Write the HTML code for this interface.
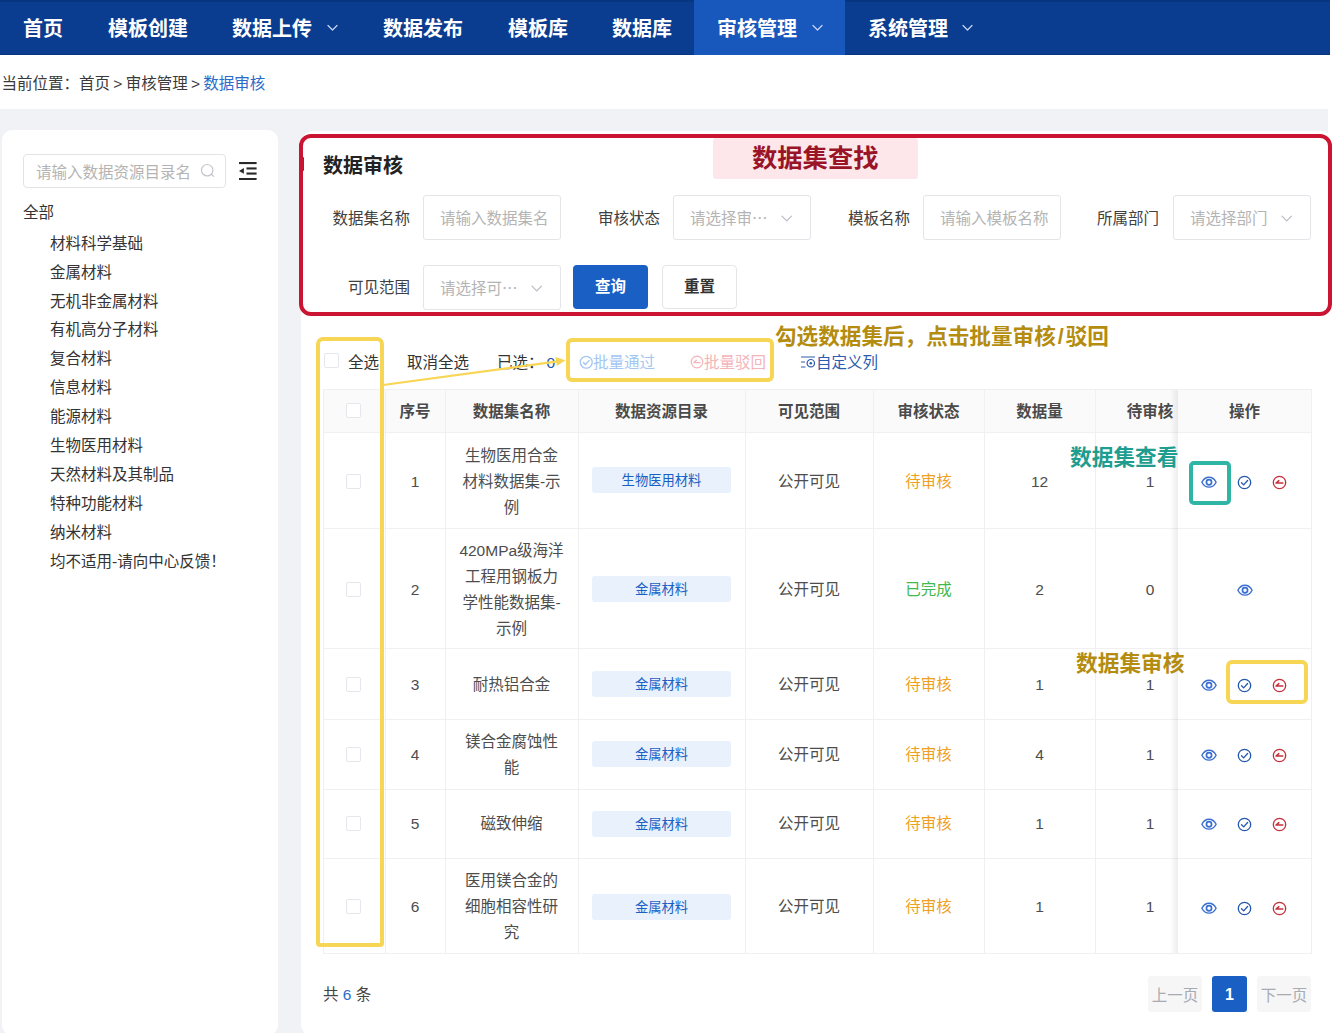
<!DOCTYPE html>
<html lang="zh-CN">
<head>
<meta charset="utf-8">
<title>数据审核</title>
<style>
*{box-sizing:border-box;margin:0;padding:0}
html,body{width:1333px;height:1033px;overflow:hidden;background:#fff}
body{font-family:"Liberation Sans","Noto Sans CJK SC",sans-serif;color:#333;position:relative;font-size:15.5px}
.abs{position:absolute}
.t{position:absolute;white-space:nowrap;line-height:1}
/* nav */
#nav{position:absolute;left:0;top:0;width:1330px;height:55px;background:#0a3d90;box-shadow:inset 0 2px 0 rgba(0,0,40,.13),inset 0 -1px 0 rgba(0,0,40,.13)}
#nav .act{position:absolute;left:694px;top:0;width:151px;height:55px;background:#1858bd}
#nav .ni{position:absolute;top:17px;font-size:20px;font-weight:700;color:#fff;line-height:24px;white-space:nowrap}
#nav svg{position:absolute;top:23px}
#crumb{left:1.5px;top:75px;word-spacing:-1px;font-size:15.5px;color:#3a3a3a;line-height:18px}
#crumb span{color:#2a6bc9}
#gray{position:absolute;left:0;top:109px;width:1328px;height:924px;background:#f0f2f5}
/* sidebar */
#side{position:absolute;left:2px;top:130px;width:276px;height:905px;background:#fff;border-radius:10px}
#sinput{position:absolute;left:23px;top:154px;width:203px;height:34px;border:1px solid #e2e3e6;border-radius:4px;background:#fff}
#sinput .ph{left:12px;top:8.5px;font-size:15.5px;color:#b4b4b4;line-height:18px}
.tree{margin-top:1px;font-size:15.5px;color:#333;line-height:18px}
/* main */
#card1{position:absolute;left:301px;top:131px;width:1032px;height:300px;background:#fff;border-radius:12px 12px 0 0}
#card2{position:absolute;left:301px;top:320px;width:1032px;height:715px;background:#fff;border-radius:10px}

.lbl{position:absolute;margin-top:1px;font-size:15.5px;color:#404040;line-height:18px;white-space:nowrap;text-align:right}
.inp{position:absolute;margin:-1px 0 0 -1px;height:45px;width:138px;border:1px solid #e3e5e9;border-radius:3px;background:#fff}
.inp .ph{position:absolute;left:16px;top:14px;font-size:15.5px;color:#b4b4b4;line-height:18px;white-space:nowrap;overflow:hidden}
.inp svg{position:absolute;right:18px;top:19px}
.btn{position:absolute;height:44px;width:75px;border-radius:4px;font-size:15.5px;font-weight:700;line-height:44px;text-align:center}

#tbl{position:absolute;left:323px;top:390px;width:988px;height:564px}
#tbl .hbg{top:-1px!important;height:43px!important;width:989px!important}
.hl{position:absolute;left:0;width:989px;height:1px;background:#f0f0f0}
.vl{position:absolute;top:0;width:1px;height:563px;background:#f0f0f0}
.th{position:absolute;top:0;height:42px;line-height:43px;font-size:15.5px;font-weight:700;color:#4a4a4a;text-align:center;white-space:nowrap}
.td{position:absolute;padding-top:1px;font-size:15.5px;color:#4d4d4d;text-align:center;line-height:26px;display:flex;align-items:center;justify-content:center}
.tag{position:absolute;left:269px;width:139px;height:26px;background:#e8f1fc;border-radius:3px;color:#1a5fc4;font-size:13.3px;line-height:28px;text-align:center}
.cb{position:absolute;width:15px;height:15px;border:1px solid #e5e7ec;border-radius:2px;background:#fff}
.wait{color:#f0a020}.done{color:#3fb950}
.tb{position:absolute;margin-top:1px;white-space:nowrap;font-size:15.5px;line-height:18px;color:#333}

.ann{position:absolute;white-space:nowrap;font-weight:700;line-height:1}
.el{font-family:"Noto Sans CJK SC",sans-serif;line-height:0}
</style>
</head>
<body>
<div id="nav">
  <div class="act"></div>
  <div class="ni" style="left:23px">首页</div>
  <div class="ni" style="left:108px">模板创建</div>
  <div class="ni" style="left:232px">数据上传</div>
  <div class="ni" style="left:383px">数据发布</div>
  <div class="ni" style="left:508px">模板库</div>
  <div class="ni" style="left:612px">数据库</div>
  <div class="ni" style="left:717px">审核管理</div>
  <div class="ni" style="left:868px">系统管理</div>
</div>
<div id="crumb" class="t">当前位置：首页 &gt; 审核管理 &gt; <span>数据审核</span></div>
<div id="gray"></div>
<div id="side"></div>
<div id="card1"></div>
<div id="card2"></div>
<div id="sinput"><div class="t ph">请输入数据资源目录名</div>
<svg class="abs" style="left:175px;top:7px" width="18" height="18" viewBox="0 0 18 18" fill="none" stroke="#c3c6cc" stroke-width="1.200"><circle cx="8.200" cy="8.200" r="5.700"/><path d="M12.300 12.300l2.300 2" stroke-linecap="round"/></svg></div>
<svg class="abs" style="left:238.900px;top:161.800px" width="18" height="18.500" viewBox="0 0 18 18.500" fill="#2a2a2a"><rect x="0" y="0" width="17.600" height="2.100"/><rect x="7.500" y="5.400" width="10.100" height="2.100"/><rect x="7.500" y="10.500" width="10.100" height="2.100"/><rect x="0" y="16" width="17.600" height="2.100"/><path d="M0 8.900l4.900-2.900v5.800z"/></svg>
<div class="t tree" style="left:23px;top:203px">全部</div>
<div class="t tree" style="left:50px;top:234px">材料科学基础</div>
<div class="t tree" style="left:50px;top:263px">金属材料</div>
<div class="t tree" style="left:50px;top:292px">无机非金属材料</div>
<div class="t tree" style="left:50px;top:320px">有机高分子材料</div>
<div class="t tree" style="left:50px;top:349px">复合材料</div>
<div class="t tree" style="left:50px;top:378px">信息材料</div>
<div class="t tree" style="left:50px;top:407px">能源材料</div>
<div class="t tree" style="left:50px;top:436px">生物医用材料</div>
<div class="t tree" style="left:50px;top:465px">天然材料及其制品</div>
<div class="t tree" style="left:50px;top:494px">特种功能材料</div>
<div class="t tree" style="left:50px;top:523px">纳米材料</div>
<div class="t tree" style="left:50px;top:552px">均不适用-请向中心反馈！</div>
<div class="abs" style="left:301px;top:157px;width:3px;height:14px;background:#2b4a9b;border-radius:1px"></div>
<div class="t" style="left:323px;top:154px;font-size:20px;font-weight:700;color:#222;line-height:24px">数据审核</div>
<div class="lbl" style="right:923px;top:209px">数据集名称</div>
<div class="inp" style="left:424px;top:196px;width:138px"><div class="ph">请输入数据集名</div></div>
<div class="lbl" style="right:673px;top:209px">审核状态</div>
<div class="inp" style="left:674px;top:196px;width:138px"><div class="ph">请选择审<span class="el">…</span></div><svg width="11.5" height="7.600" viewBox="0 0 12 8" fill="none" stroke="#b9bcc4" stroke-width="1.3" stroke-linecap="round" stroke-linejoin="round"><path d="M1 1.2l5 5 5-5"/></svg></div>
<div class="lbl" style="right:423px;top:209px">模板名称</div>
<div class="inp" style="left:924px;top:196px;width:138px"><div class="ph">请输入模板名称</div></div>
<div class="lbl" style="right:174px;top:209px">所属部门</div>
<div class="inp" style="left:1174px;top:196px;width:138px"><div class="ph">请选择部门</div><svg width="11.5" height="7.600" viewBox="0 0 12 8" fill="none" stroke="#b9bcc4" stroke-width="1.3" stroke-linecap="round" stroke-linejoin="round"><path d="M1 1.2l5 5 5-5"/></svg></div>
<div class="lbl" style="right:923px;top:278px">可见范围</div>
<div class="inp" style="left:424px;top:266px;width:138px"><div class="ph">请选择可<span class="el">…</span></div><svg width="11.5" height="7.600" viewBox="0 0 12 8" fill="none" stroke="#b9bcc4" stroke-width="1.3" stroke-linecap="round" stroke-linejoin="round"><path d="M1 1.2l5 5 5-5"/></svg></div>
<div class="btn" style="left:573px;top:265px;background:#1a5fc4;color:#fff">查询</div>
<div class="btn" style="left:662px;top:265px;background:#fff;color:#333;border:1px solid #e3e5e9;line-height:42px">重置</div>
<!--T0--><div id="tbl">
<div class="abs hbg" style="left:0;top:0;width:988px;height:42px;background:#fafafa"></div>
<div class="th" style="left:62px;width:60px">序号</div>
<div class="th" style="left:122px;width:133px">数据集名称</div>
<div class="th" style="left:255px;width:167px">数据资源目录</div>
<div class="th" style="left:422px;width:128px">可见范围</div>
<div class="th" style="left:550px;width:111px">审核状态</div>
<div class="th" style="left:661px;width:111px">数据量</div>
<div class="th" style="left:772px;width:110px">待审核</div>
<div class="th" style="left:855px;width:133px">操作</div>
<div class="cb" style="left:23px;top:13px"></div>
<div class="hl" style="top:-1px"></div>
<div class="hl" style="top:42px"></div>
<div class="hl" style="top:138px"></div>
<div class="hl" style="top:258px"></div>
<div class="hl" style="top:329px"></div>
<div class="hl" style="top:399px"></div>
<div class="hl" style="top:468px"></div>
<div class="hl" style="top:563px"></div>
<div class="vl" style="left:0px"></div>
<div class="vl" style="left:62px"></div>
<div class="vl" style="left:122px"></div>
<div class="vl" style="left:255px"></div>
<div class="vl" style="left:422px"></div>
<div class="vl" style="left:550px"></div>
<div class="vl" style="left:661px"></div>
<div class="vl" style="left:772px"></div>
<div class="vl" style="left:988px"></div>
<div class="abs" style="left:847px;top:0;width:8px;height:563px;background:linear-gradient(to left,rgba(0,0,0,.07),rgba(0,0,0,0))"></div>
<div class="cb" style="left:23px;top:84px"></div>
<div class="td" style="left:62px;top:43px;width:60px;height:96px">1</div>
<div class="td" style="left:122px;top:43px;width:133px;height:96px">生物医用合金<br>材料数据集-示<br>例</div>
<div class="tag" style="top:77px">生物医用材料</div>
<div class="td" style="left:422px;top:43px;width:128px;height:96px">公开可见</div>
<div class="td wait" style="left:550px;top:43px;width:111px;height:96px">待审核</div>
<div class="td" style="left:661px;top:43px;width:111px;height:96px">12</div>
<div class="td" style="left:772px;top:43px;width:110px;height:96px">1</div>
<svg class="abs" style="left:878px;top:85.8px" width="16" height="12.44" viewBox="0 0 18 14" fill="none" stroke="#3a6fd0" stroke-width="1.6"><path d="M1 7C3 3.2 5.8 1.5 9 1.5S15 3.2 17 7c-2 3.8-4.8 5.5-8 5.5S3 10.8 1 7z"/><circle cx="9" cy="7" r="2.9" stroke-width="1.9"/></svg>
<svg class="abs" style="left:913.9px;top:84.5px" width="15" height="15" viewBox="0 0 16 16" fill="none" stroke="#2557b0" stroke-width="1.4"><circle cx="8" cy="8" r="6.6"/><path d="M4.8 8.2l2.3 2.3 4.2-4.6" stroke-linecap="round" stroke-linejoin="round"/></svg>
<svg class="abs" style="left:948.9px;top:84.5px" width="15" height="15" viewBox="0 0 16 16" fill="none" stroke="#c62f3a" stroke-width="1.4"><circle cx="8" cy="8" r="6.6"/><path d="M4.3 8.6h7.2M4.3 8.6l3-2.6" stroke-width="1.6" stroke-linecap="round" stroke-linejoin="round"/></svg>
<div class="cb" style="left:23px;top:192px"></div>
<div class="td" style="left:62px;top:139px;width:60px;height:120px">2</div>
<div class="td" style="left:122px;top:139px;width:133px;height:120px">420MPa级海洋<br>工程用钢板力<br>学性能数据集-<br>示例</div>
<div class="tag" style="top:186px">金属材料</div>
<div class="td" style="left:422px;top:139px;width:128px;height:120px">公开可见</div>
<div class="td done" style="left:550px;top:139px;width:111px;height:120px">已完成</div>
<div class="td" style="left:661px;top:139px;width:111px;height:120px">2</div>
<div class="td" style="left:772px;top:139px;width:110px;height:120px">0</div>
<svg class="abs" style="left:913.5px;top:194.3px" width="16" height="12.44" viewBox="0 0 18 14" fill="none" stroke="#3a6fd0" stroke-width="1.6"><path d="M1 7C3 3.2 5.8 1.5 9 1.5S15 3.2 17 7c-2 3.8-4.8 5.5-8 5.5S3 10.8 1 7z"/><circle cx="9" cy="7" r="2.9" stroke-width="1.9"/></svg>
<div class="cb" style="left:23px;top:287px"></div>
<div class="td" style="left:62px;top:259px;width:60px;height:71px">3</div>
<div class="td" style="left:122px;top:259px;width:133px;height:71px">耐热铝合金</div>
<div class="tag" style="top:281px">金属材料</div>
<div class="td" style="left:422px;top:259px;width:128px;height:71px">公开可见</div>
<div class="td wait" style="left:550px;top:259px;width:111px;height:71px">待审核</div>
<div class="td" style="left:661px;top:259px;width:111px;height:71px">1</div>
<div class="td" style="left:772px;top:259px;width:110px;height:71px">1</div>
<svg class="abs" style="left:878px;top:289.3px" width="16" height="12.44" viewBox="0 0 18 14" fill="none" stroke="#3a6fd0" stroke-width="1.6"><path d="M1 7C3 3.2 5.8 1.5 9 1.5S15 3.2 17 7c-2 3.8-4.8 5.5-8 5.5S3 10.8 1 7z"/><circle cx="9" cy="7" r="2.9" stroke-width="1.9"/></svg>
<svg class="abs" style="left:913.9px;top:288px" width="15" height="15" viewBox="0 0 16 16" fill="none" stroke="#2557b0" stroke-width="1.4"><circle cx="8" cy="8" r="6.6"/><path d="M4.8 8.2l2.3 2.3 4.2-4.6" stroke-linecap="round" stroke-linejoin="round"/></svg>
<svg class="abs" style="left:948.9px;top:288px" width="15" height="15" viewBox="0 0 16 16" fill="none" stroke="#c62f3a" stroke-width="1.4"><circle cx="8" cy="8" r="6.6"/><path d="M4.3 8.6h7.2M4.3 8.6l3-2.6" stroke-width="1.6" stroke-linecap="round" stroke-linejoin="round"/></svg>
<div class="cb" style="left:23px;top:357px"></div>
<div class="td" style="left:62px;top:329px;width:60px;height:70px">4</div>
<div class="td" style="left:122px;top:329px;width:133px;height:70px">镁合金腐蚀性<br>能</div>
<div class="tag" style="top:351px">金属材料</div>
<div class="td" style="left:422px;top:329px;width:128px;height:70px">公开可见</div>
<div class="td wait" style="left:550px;top:329px;width:111px;height:70px">待审核</div>
<div class="td" style="left:661px;top:329px;width:111px;height:70px">4</div>
<div class="td" style="left:772px;top:329px;width:110px;height:70px">1</div>
<svg class="abs" style="left:878px;top:358.8px" width="16" height="12.44" viewBox="0 0 18 14" fill="none" stroke="#3a6fd0" stroke-width="1.6"><path d="M1 7C3 3.2 5.8 1.5 9 1.5S15 3.2 17 7c-2 3.8-4.8 5.5-8 5.5S3 10.8 1 7z"/><circle cx="9" cy="7" r="2.9" stroke-width="1.9"/></svg>
<svg class="abs" style="left:913.9px;top:357.5px" width="15" height="15" viewBox="0 0 16 16" fill="none" stroke="#2557b0" stroke-width="1.4"><circle cx="8" cy="8" r="6.6"/><path d="M4.8 8.2l2.3 2.3 4.2-4.6" stroke-linecap="round" stroke-linejoin="round"/></svg>
<svg class="abs" style="left:948.9px;top:357.5px" width="15" height="15" viewBox="0 0 16 16" fill="none" stroke="#c62f3a" stroke-width="1.4"><circle cx="8" cy="8" r="6.6"/><path d="M4.3 8.6h7.2M4.3 8.6l3-2.6" stroke-width="1.6" stroke-linecap="round" stroke-linejoin="round"/></svg>
<div class="cb" style="left:23px;top:426px"></div>
<div class="td" style="left:62px;top:399px;width:60px;height:69px">5</div>
<div class="td" style="left:122px;top:399px;width:133px;height:69px">磁致伸缩</div>
<div class="tag" style="top:421px">金属材料</div>
<div class="td" style="left:422px;top:399px;width:128px;height:69px">公开可见</div>
<div class="td wait" style="left:550px;top:399px;width:111px;height:69px">待审核</div>
<div class="td" style="left:661px;top:399px;width:111px;height:69px">1</div>
<div class="td" style="left:772px;top:399px;width:110px;height:69px">1</div>
<svg class="abs" style="left:878px;top:428.3px" width="16" height="12.44" viewBox="0 0 18 14" fill="none" stroke="#3a6fd0" stroke-width="1.6"><path d="M1 7C3 3.2 5.8 1.5 9 1.5S15 3.2 17 7c-2 3.8-4.8 5.5-8 5.5S3 10.8 1 7z"/><circle cx="9" cy="7" r="2.9" stroke-width="1.9"/></svg>
<svg class="abs" style="left:913.9px;top:427px" width="15" height="15" viewBox="0 0 16 16" fill="none" stroke="#2557b0" stroke-width="1.4"><circle cx="8" cy="8" r="6.6"/><path d="M4.8 8.2l2.3 2.3 4.2-4.6" stroke-linecap="round" stroke-linejoin="round"/></svg>
<svg class="abs" style="left:948.9px;top:427px" width="15" height="15" viewBox="0 0 16 16" fill="none" stroke="#c62f3a" stroke-width="1.4"><circle cx="8" cy="8" r="6.6"/><path d="M4.3 8.6h7.2M4.3 8.6l3-2.6" stroke-width="1.6" stroke-linecap="round" stroke-linejoin="round"/></svg>
<div class="cb" style="left:23px;top:509px"></div>
<div class="td" style="left:62px;top:469px;width:60px;height:95px">6</div>
<div class="td" style="left:122px;top:469px;width:133px;height:95px">医用镁合金的<br>细胞相容性研<br>究</div>
<div class="tag" style="top:504px">金属材料</div>
<div class="td" style="left:422px;top:469px;width:128px;height:95px">公开可见</div>
<div class="td wait" style="left:550px;top:469px;width:111px;height:95px">待审核</div>
<div class="td" style="left:661px;top:469px;width:111px;height:95px">1</div>
<div class="td" style="left:772px;top:469px;width:110px;height:95px">1</div>
<svg class="abs" style="left:878px;top:512.3px" width="16" height="12.44" viewBox="0 0 18 14" fill="none" stroke="#3a6fd0" stroke-width="1.6"><path d="M1 7C3 3.2 5.8 1.5 9 1.5S15 3.2 17 7c-2 3.8-4.8 5.5-8 5.5S3 10.8 1 7z"/><circle cx="9" cy="7" r="2.9" stroke-width="1.9"/></svg>
<svg class="abs" style="left:913.9px;top:511px" width="15" height="15" viewBox="0 0 16 16" fill="none" stroke="#2557b0" stroke-width="1.4"><circle cx="8" cy="8" r="6.6"/><path d="M4.8 8.2l2.3 2.3 4.2-4.6" stroke-linecap="round" stroke-linejoin="round"/></svg>
<svg class="abs" style="left:948.9px;top:511px" width="15" height="15" viewBox="0 0 16 16" fill="none" stroke="#c62f3a" stroke-width="1.4"><circle cx="8" cy="8" r="6.6"/><path d="M4.3 8.6h7.2M4.3 8.6l3-2.6" stroke-width="1.6" stroke-linecap="round" stroke-linejoin="round"/></svg>
</div><!--T1-->
<div class="cb" style="left:324px;top:353px"></div>
<div class="tb" style="left:348px;top:353px">全选</div>
<div class="tb" style="left:407px;top:353px">取消全选</div>
<div class="tb" style="left:497px;top:353px">已选：<span style="color:#2557b0;margin-left:3px">0</span></div>
<div class="tb" style="left:323px;top:985px;color:#444">共 <span style="color:#2a6bc9">6</span> 条</div>
<div class="abs" style="left:1148px;top:976px;width:54px;height:36px;background:#f6f6f7;border-radius:3px;color:#a8abb2;font-size:15.5px;line-height:39px;text-align:center">上一页</div>
<div class="abs" style="left:1212px;top:976px;width:35px;height:36px;background:#1a5fc4;border-radius:3px;color:#fff;font-weight:700;font-size:16px;line-height:38px;text-align:center">1</div>
<div class="abs" style="left:1257px;top:976px;width:54px;height:36px;background:#f6f6f7;border-radius:3px;color:#a8abb2;font-size:15.5px;line-height:39px;text-align:center">下一页</div>
<svg class="abs" style="left:327px;top:24px" width="11" height="8" viewBox="0 0 11 8" fill="none" stroke="#c9d6ee" stroke-width="1.2" stroke-linecap="round" stroke-linejoin="round"><path d="M1 1.500l4.500 4.500 4.500-4.500"/></svg>
<svg class="abs" style="left:812px;top:24px" width="11" height="8" viewBox="0 0 11 8" fill="none" stroke="#c9d6ee" stroke-width="1.2" stroke-linecap="round" stroke-linejoin="round"><path d="M1 1.500l4.500 4.500 4.500-4.500"/></svg>
<svg class="abs" style="left:962px;top:24px" width="11" height="8" viewBox="0 0 11 8" fill="none" stroke="#c9d6ee" stroke-width="1.2" stroke-linecap="round" stroke-linejoin="round"><path d="M1 1.500l4.500 4.500 4.500-4.500"/></svg>
<div class="abs" style="left:299.200px;top:133.500px;width:1033.300px;height:182.800px;border:4.200px solid #cb1431;border-radius:12px"></div>
<div class="abs" style="left:713px;top:137.500px;width:205px;height:41px;background:#fde7ea;border-radius:3px"></div>
<div class="ann" style="left:752px;top:144.500px;font-size:25.300px;color:#9a1428;line-height:26px">数据集查找</div>
<svg class="abs" style="left:578.500px;top:354.500px" width="14.500" height="14.500" viewBox="0 0 16 16" fill="none" stroke="#a3c6f3" stroke-width="1.400"><circle cx="8" cy="8" r="6.600"/><path d="M4.800 8.200l2.300 2.300 4.200-4.600" stroke-linecap="round" stroke-linejoin="round"/></svg>
<div class="tb" style="left:593px;top:353px;color:#a3c6f3">批量通过</div>
<svg class="abs" style="left:690px;top:355px" width="14" height="14" viewBox="0 0 16 16" fill="none" stroke="#f3b4ba" stroke-width="1.400"><circle cx="8" cy="8" r="6.600"/><path d="M4.300 8.600h7.200M4.300 8.600l3-2.600" stroke-linecap="round" stroke-linejoin="round"/></svg>
<div class="tb" style="left:704px;top:353px;color:#f3b4ba">批量驳回</div>
<svg class="abs" style="left:800.500px;top:355.800px" width="14.500" height="12" viewBox="0 0 14.500 12" fill="none" stroke="#2c5cb0" stroke-width="1.200"><path d="M0 1h14.300M0 6h4M0 11h4.500"/><circle cx="9.800" cy="7.200" r="3.700"/><circle cx="9.800" cy="7.200" r="1.300" fill="#2c5cb0" stroke="none"/></svg>
<div class="tb" style="left:816px;top:353px;color:#2c5cb0">自定义列</div>
<div class="abs" style="left:316.300px;top:337.400px;width:67.600px;height:609.500px;border:4.300px solid #f7d555;border-radius:7px 7px 4px 4px"></div>
<div class="abs" style="left:565.5px;top:338px;width:208.5px;height:44px;border:4.200px solid #f7d555;border-radius:6px"></div>
<div class="abs" style="left:1225.800px;top:660px;width:82.600px;height:43.600px;border:4.200px solid #f7d555;border-radius:6px"></div>
<svg class="abs" style="left:380px;top:350px" width="200" height="50" viewBox="0 0 200 50"><path d="M3 35L178 11.400" fill="none" stroke="#f8d555" stroke-width="2.200" stroke-linecap="round"/><path d="M185.500 10.200L176.800 15.900L175.600 6.900z" fill="#f8d555"/></svg>
<div class="abs" style="left:1189px;top:461px;width:42px;height:44px;border:4px solid #2fb5a5;border-radius:5px"></div>
<div class="ann" style="left:775px;top:326px;font-size:21.6px;color:#b38c10;line-height:22px">勾选数据集后，点击批量审核<span style="padding:0 2px">/</span>驳回</div>
<div class="ann" style="left:1070px;top:447px;font-size:21.7px;color:#1f9d8f;line-height:22px">数据集查看</div>
<div class="ann" style="left:1076px;top:652.500px;font-size:21.7px;color:#b38c10;line-height:22px">数据集审核</div>
</body>
</html>
